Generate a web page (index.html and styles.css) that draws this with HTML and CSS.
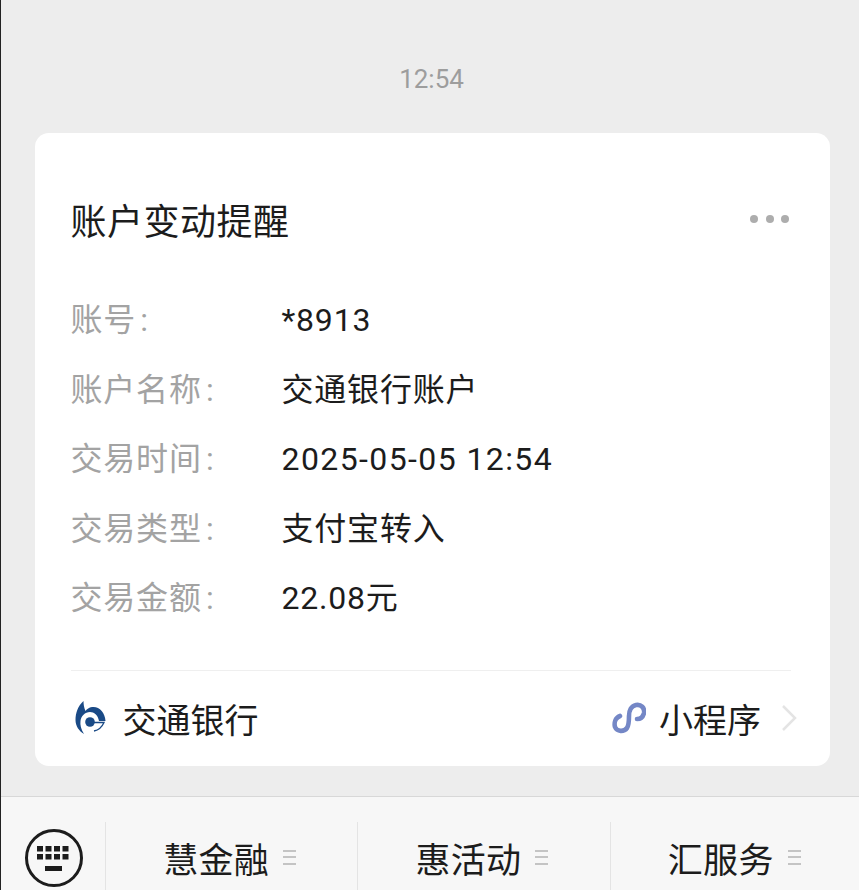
FILE: index.html
```html
<!DOCTYPE html>
<html lang="zh-CN">
<head>
    <meta charset="UTF-8">
    <meta name="viewport" content="width=device-width, initial-scale=1.0">
    <title>账户变动提醒</title>
    <link rel="stylesheet" href="styles.css">
</head>
<body>
    <div class="chat">
        <p class="time">12:54</p>
        <div class="card">
            <div class="card-head">
                <h2>账户变动提醒</h2>
                <div class="more"><i></i><i></i><i></i></div>
            </div>
            <div class="rows">
                <div class="row"><span class="label">账号 :</span><span>*8913</span></div>
                <div class="row"><span class="label">账户名称 :</span><span>交通银行账户</span></div>
                <div class="row"><span class="label">交易时间 :</span><span class="wide">2025-05-05 12:54</span></div>
                <div class="row"><span class="label">交易类型 :</span><span>支付宝转入</span></div>
                <div class="row"><span class="label">交易金额 :</span><span>22.08元</span></div>
            </div>
            <div class="card-foot">
                <svg class="bank-logo" viewBox="0 0 32 34" width="32" height="34">
                    <path fill="#1a4a86" d="M9.5 0 C4 5 1.5 12 1.5 19 C1.5 25 5 30 10 33 C7 28 6 24 6.5 20 C7 15 11 11 16 11 C20 11 24 14 25 20 L31.5 20 C31 11 25 5 18 6 C15 6.5 13 8 11.5 10 C10 7 9.5 3 9.5 0 Z"/>
                    <circle fill="#1a4a86" cx="16" cy="21" r="4.8"/>
                    <path fill="none" stroke="#1a4a86" stroke-width="1.3" d="M20 21.5 H30 C28 26 25 29 20 30"/>
                </svg>
                <span class="bank-name">交通银行</span>
                <svg class="mini-logo" viewBox="0 0 34 32" width="34" height="32">
                    <path fill="none" stroke="#7487c6" stroke-width="4.6" stroke-linecap="round" d="M8 14 C3 16 2 21 3 25 C5 30 12 30 15 26 C17 23 17 19 17 14 C17 9 19 4 24 3 C29 2 33 6 32 11 C31 15 28 17 25 17"/>
                </svg>
                <span>小程序</span>
                <svg class="chevron" viewBox="0 0 16 28" width="16" height="28">
                    <path fill="none" stroke="#e4e4e4" stroke-width="2.5" d="M2 2 L14 14 L2 26"/>
                </svg>
            </div>
        </div>
    </div>
    <div class="menu-bar">
        <div class="keyboard">
            <svg viewBox="0 0 60 60" width="60" height="60">
                <circle cx="30" cy="30" r="27.5" fill="none" stroke="#1c1c1c" stroke-width="3"/>
                <g fill="#1c1c1c">
                    <rect x="13" y="18" width="6" height="5.5"/><rect x="21.5" y="18" width="6" height="5.5"/><rect x="30" y="18" width="6" height="5.5"/><rect x="38.5" y="18" width="6" height="5.5"/>
                    <rect x="13" y="26" width="6" height="5.5"/><rect x="21.5" y="26" width="6" height="5.5"/><rect x="30" y="26" width="6" height="5.5"/><rect x="38.5" y="26" width="6" height="5.5"/>
                    <rect x="21" y="38" width="17" height="5"/>
                </g>
            </svg>
        </div>
        <div class="tab">慧金融<span class="tab-lines"></span></div>
        <div class="tab">惠活动<span class="tab-lines"></span></div>
        <div class="tab">汇服务<span class="tab-lines"></span></div>
    </div>
</body>
</html>
```

FILE: styles.css
```css
html, body {
    height: 100%;
}
body {
    margin: 0;
    height: 890px;
    overflow: hidden;
    background-color: #ededed;
    border-left: 1px solid #222;
    box-sizing: border-box;
    font-family: Roboto, "Noto Sans CJK SC", sans-serif;
    color: #1c1c1c;
}
.chat {
    height: 796px;
    box-sizing: border-box;
    padding: 62px 29px 0 34px;
}
.time {
    margin: 0;
    height: 71px;
    padding-right: 2px;
    line-height: 34px;
    font-size: 26px;
    color: #9d9d9d;
    text-align: center;
}
.card {
    height: 633px;
    box-sizing: border-box;
    padding: 0 39px 0 35.5px;
    background-color: #fff;
    border-radius: 14px;
}
.card-head {
    display: flex;
    justify-content: space-between;
    align-items: center;
    height: 153px;
    box-sizing: border-box;
    padding-top: 19px;
}
h2 {
    margin: 0;
    font-size: 36px;
    font-weight: 400;
    letter-spacing: 0.5px;
}
.more {
    display: flex;
    gap: 7.5px;
    margin: 0 2px 0 0;
}
.more i {
    width: 8px;
    height: 8px;
    border-radius: 50%;
    background-color: #adadad;
}
.rows {
    height: 385px;
    box-sizing: border-box;
    border-bottom: 1px solid #efefef;
}
.row {
    display: grid;
    grid-template-columns: 211px 1fr;
    height: 69.5px;
    line-height: 69.5px;
    font-size: 32px;
    letter-spacing: 0.8px;
    white-space: nowrap;
}
.label {
    color: #a3a3a3;
    word-spacing: -4.5px;
}
.wide {
    letter-spacing: 1.4px;
}
.card-foot {
    display: flex;
    align-items: center;
    height: 94px;
    font-size: 34px;
}
.bank-logo {
    margin: 0 17px 0 3px;
}
.bank-name {
    flex: 1;
}
.mini-logo {
    margin-right: 13px;
}
.chevron {
    margin: 0 -6px 0 20px;
}
.menu-bar {
    display: flex;
    height: 94px;
    box-sizing: border-box;
    padding-top: 25px;
    background-color: #f7f7f7;
    border-top: 1px solid #d8d8d8;
}
.keyboard {
    flex: none;
    width: 104px;
    padding: 6px 0 0 23px;
    box-sizing: border-box;
}
.tab {
    display: flex;
    flex: none;
    align-items: center;
    justify-content: center;
    width: 252.3px;
    height: 70px;
    box-sizing: border-box;
    padding-right: 4px;
    border-left: 1px solid #e4e4e4;
    font-size: 35px;
    letter-spacing: 0.3px;
}
.tab-lines {
    width: 13px;
    height: 11px;
    margin-left: 14px;
    border-top: 2px solid #c4c4c4;
    border-bottom: 2px solid #c4c4c4;
    background: linear-gradient(#c4c4c4, #c4c4c4) center / 100% 2px no-repeat;
}
```
